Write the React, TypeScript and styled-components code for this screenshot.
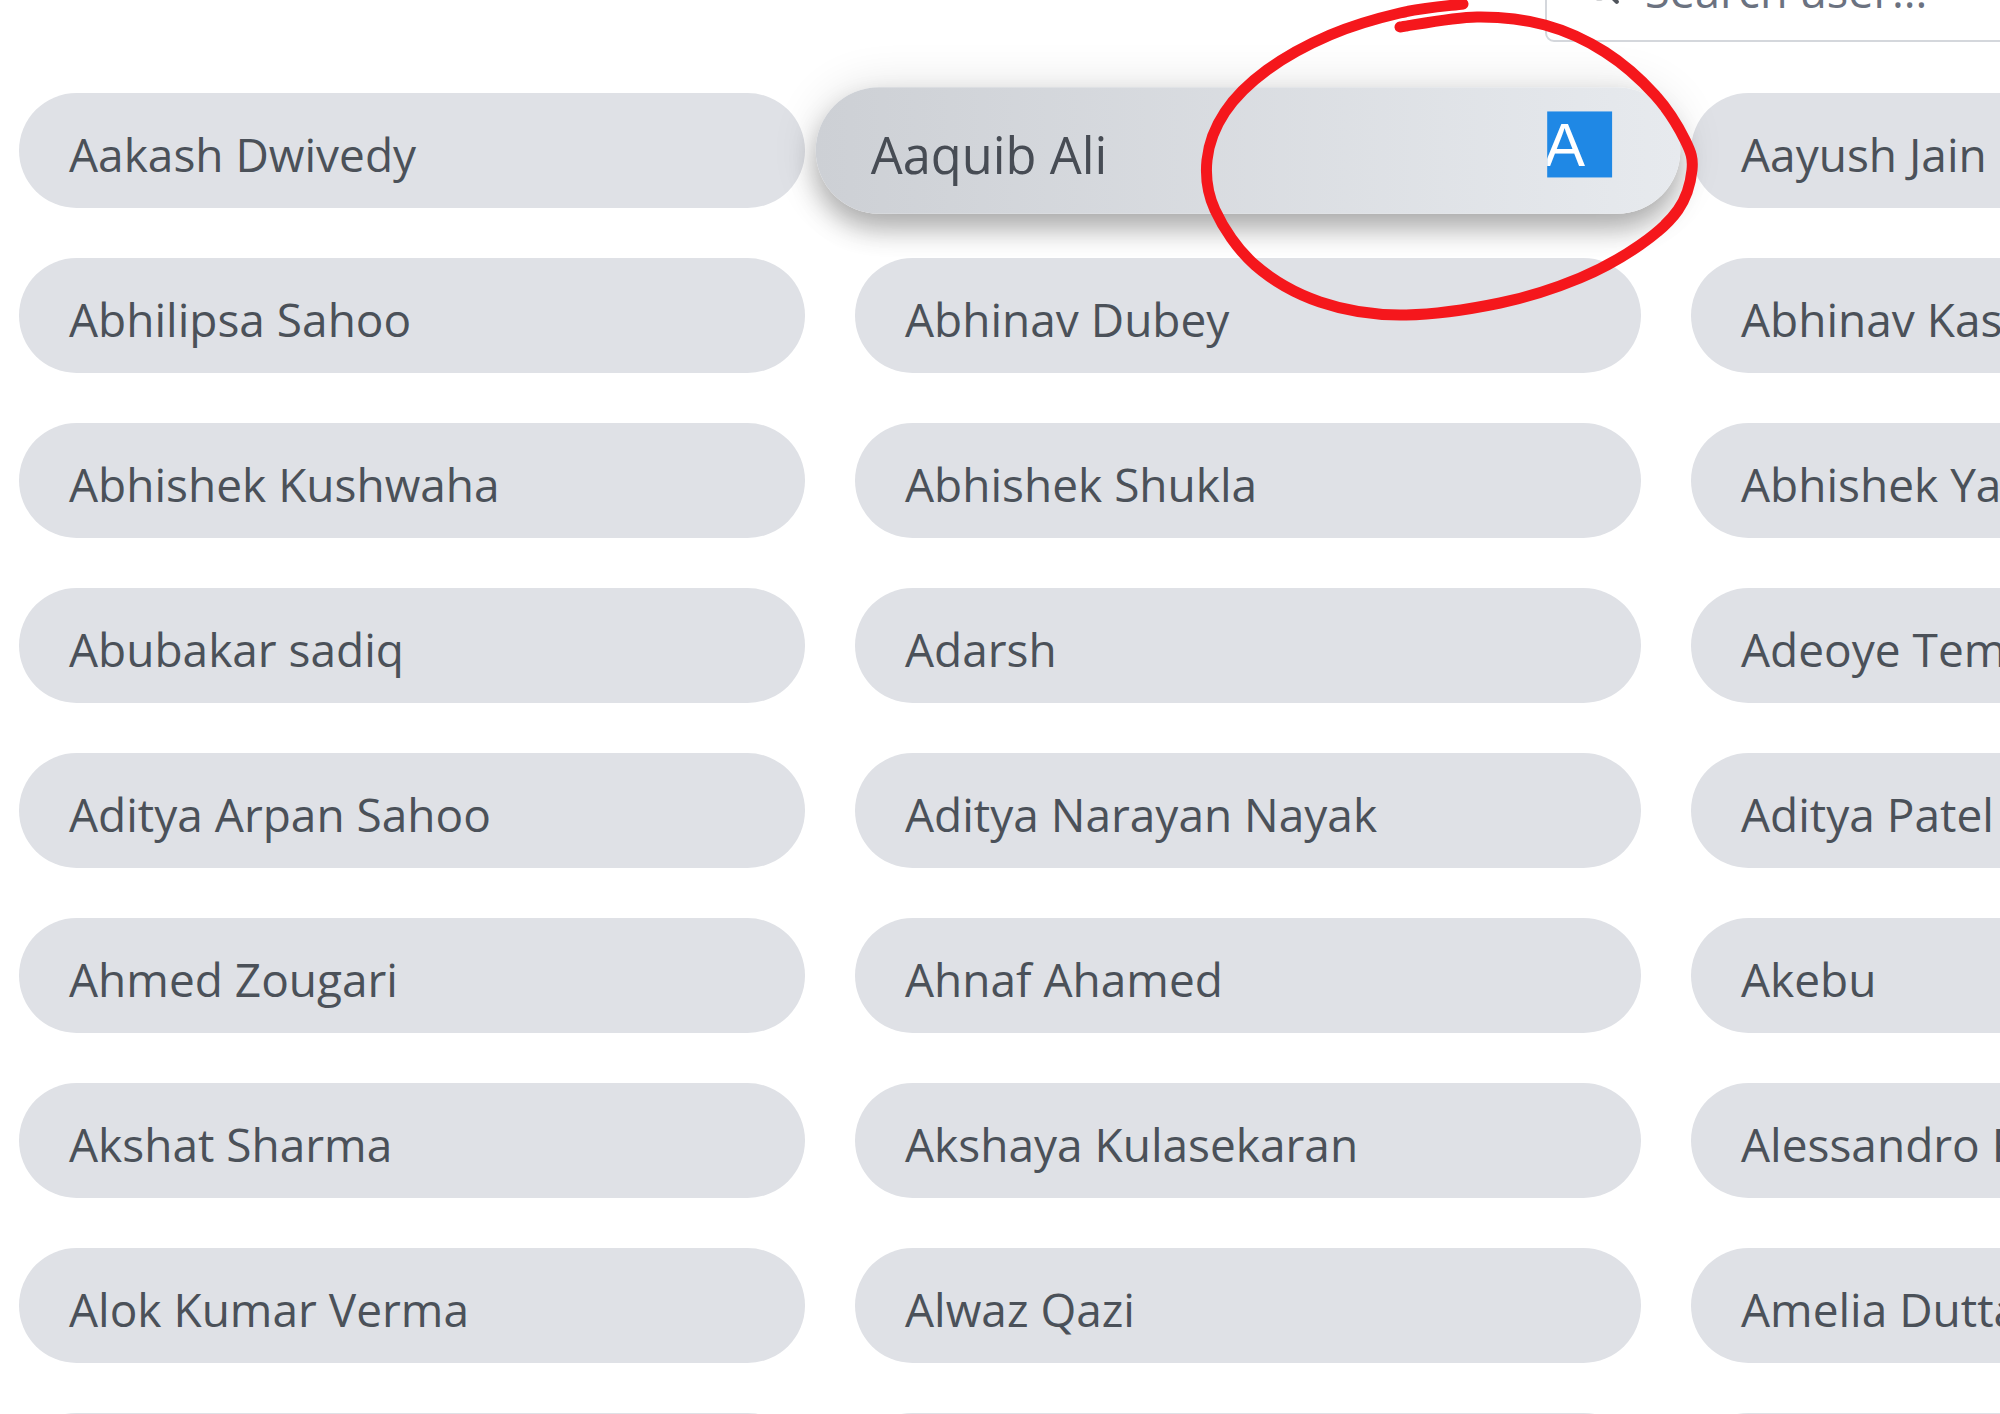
import { createGlobalStyle, styled } from "styled-components";

const GlobalStyle = createGlobalStyle`
  html, body {
    margin: 0;
    padding: 0;
    background: #ffffff;
    overflow: hidden;
  }
  body {
    font-family: "Open Sans", "Noto Sans", sans-serif;
  }
`;

const users = [
  "Aakash Dwivedy",
  "Aaquib Ali",
  "Aayush Jain",
  "Abhilipsa Sahoo",
  "Abhinav Dubey",
  "Abhinav Kashyap",
  "Abhishek Kushwaha",
  "Abhishek Shukla",
  "Abhishek Yadav",
  "Abubakar sadiq",
  "Adarsh",
  "Adeoye Temitope",
  "Aditya Arpan Sahoo",
  "Aditya Narayan Nayak",
  "Aditya Patel",
  "Ahmed Zougari",
  "Ahnaf Ahamed",
  "Akebu",
  "Akshat Sharma",
  "Akshaya Kulasekaran",
  "Alessandro Rossi",
  "Alok Kumar Verma",
  "Alwaz Qazi",
  "Amelia Dutta",
  "Aman Gupta",
  "Aman Kumar",
  "Amit Singh",
];

// hovered card in the capture
const HOVERED = 1;

const Page = styled.div`
  width: 2458px;
  margin-top: -62px;
  padding-left: 19px;
`;

const TopBar = styled.header`
  display: flex;
  justify-content: flex-end;
  margin-bottom: 51px;
`;

const SearchBox = styled.label`
  display: flex;
  align-items: center;
  gap: 23px;
  width: 932px;
  height: 104px;
  box-sizing: border-box;
  padding-left: 33px;
  border: 2px solid #d4d7dc;
  border-radius: 9px;
  background: #fff;
  color: #50555c;
`;

const SearchInput = styled.input`
  flex: 1;
  border: none;
  outline: none;
  background: transparent;
  font-family: "Open Sans", "Noto Sans", sans-serif;
  font-size: 45px;
  color: #374151;
  padding: 0;

  &::placeholder {
    color: #6b7280;
  }
`;

const Grid = styled.div`
  display: grid;
  grid-template-columns: repeat(3, 786px);
  grid-auto-rows: 115px;
  column-gap: 50px;
  row-gap: 50px;
`;

const UserCard = styled.div<{ $active?: boolean }>`
  display: flex;
  align-items: center;
  justify-content: space-between;
  box-sizing: border-box;
  padding: 6px 50px 0 50px;
  border-radius: 9999px;
  background: ${(p) =>
    p.$active ? "linear-gradient(90deg, #cdd0d5 0%, #e7eaee 100%)" : "#dfe1e6"};
  color: ${(p) => (p.$active ? "#474c54" : "#4b5159")};
  font-size: 46px;
  white-space: nowrap;
  position: relative;
  z-index: ${(p) => (p.$active ? 2 : 1)};
  transform: ${(p) => (p.$active ? "scale(1.1)" : "none")};
  box-shadow: ${(p) =>
    p.$active
      ? "0 14px 24px rgba(0, 0, 0, 0.28), 0 0 44px rgba(0, 0, 0, 0.12)"
      : "none"};
`;

const SelectedInitial = styled.span`
  display: block;
  width: 59px;
  height: 60px;
  margin: 0 12px 18px 0;
  overflow: hidden;
  background: #1f88e5;
  color: #fff;
  font-family: "Liberation Sans", Arial, sans-serif;
  font-size: 56px;
  line-height: 62px;
  text-indent: -3px;
`;

const Annotation = styled.svg`
  position: fixed;
  top: 0;
  left: 0;
  width: 2000px;
  height: 1414px;
  pointer-events: none;
  z-index: 10;
`;

const circlePoints: [number, number][] = [
  [1400, 27],
  [1477, 17],
  [1545, 25],
  [1605, 52],
  [1655, 95],
  [1685, 140],
  [1692, 170],
  [1678, 210],
  [1640, 245],
  [1580, 278],
  [1500, 303],
  [1400, 315],
  [1320, 302],
  [1255, 265],
  [1215, 210],
  [1207, 160],
  [1225, 112],
  [1267, 70],
  [1330, 35],
  [1400, 13],
  [1463, 4],
];

function smoothPath(pts: [number, number][]) {
  let d = `M${pts[0][0]},${pts[0][1]}`;
  for (let i = 0; i < pts.length - 1; i++) {
    const p0 = pts[i - 1] ?? pts[i];
    const p1 = pts[i];
    const p2 = pts[i + 1];
    const p3 = pts[i + 2] ?? p2;
    const c1x = p1[0] + (p2[0] - p0[0]) / 6;
    const c1y = p1[1] + (p2[1] - p0[1]) / 6;
    const c2x = p2[0] - (p3[0] - p1[0]) / 6;
    const c2y = p2[1] - (p3[1] - p1[1]) / 6;
    d += ` C${c1x.toFixed(1)},${c1y.toFixed(1)} ${c2x.toFixed(1)},${c2y.toFixed(1)} ${p2[0]},${p2[1]}`;
  }
  return d;
}

function SearchIcon() {
  return (
    <svg width="42" height="42" viewBox="0 0 24 24" fill="none" stroke="currentColor" strokeWidth="2.4" strokeLinecap="round" strokeLinejoin="round" style={{ marginTop: -8 }}>
      <circle cx="11" cy="11" r="8" />
      <path d="m21 21-4.3-4.3" />
    </svg>
  );
}

export default function App() {
  return (
    <>
      <GlobalStyle />
      <Page>
        <TopBar>
          <SearchBox>
            <SearchIcon />
            <SearchInput placeholder="Search user..." />
          </SearchBox>
        </TopBar>
        <Grid>
          {users.map((name, i) => (
            <UserCard key={name} $active={i === HOVERED}>
              <span>{name}</span>
              {i === HOVERED && <SelectedInitial>A</SelectedInitial>}
            </UserCard>
          ))}
        </Grid>
      </Page>
      <Annotation viewBox="0 0 2000 1414">
        <path d={smoothPath(circlePoints)} fill="none" stroke="#f5171c" strokeWidth="11" strokeLinecap="round" strokeLinejoin="round" />
      </Annotation>
    </>
  );
}
